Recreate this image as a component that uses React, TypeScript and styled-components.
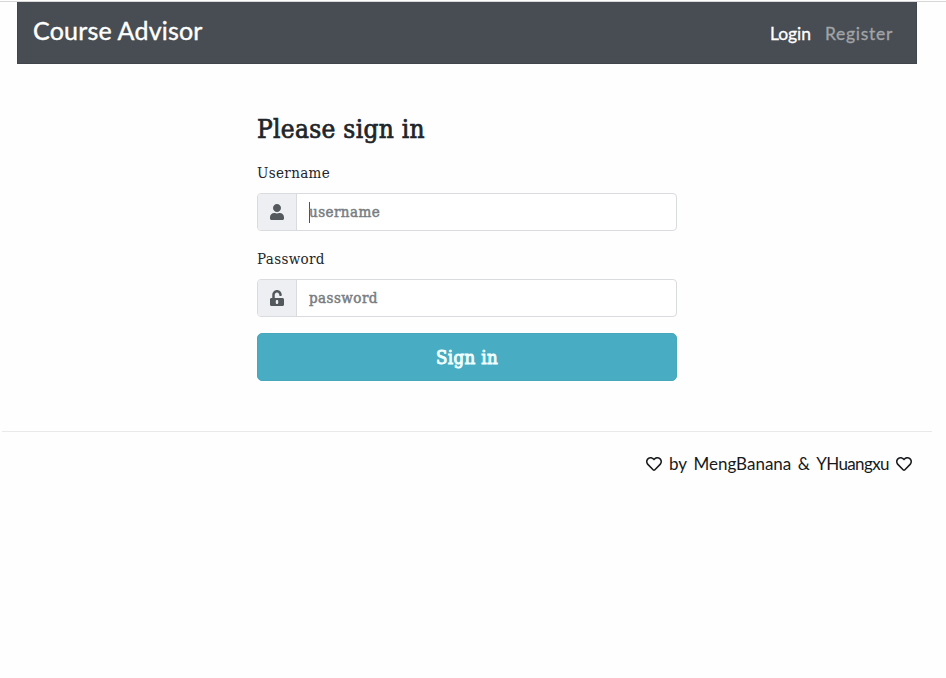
import React from "react";
import styled, { createGlobalStyle } from "styled-components";
import { FaRegHeart, FaUnlockAlt, FaUser } from "react-icons/fa";

const slab = `"DejaVu Serif Condensed", "DejaVu Serif", serif`;
const hand = `"Lato", sans-serif`;

const GlobalStyle = createGlobalStyle`
  * { box-sizing: border-box; }
  body { margin: 0; background: #fefefe; color: #212529; font-family: ${slab}; }
`;

const Page = styled.div`
  height: 678px;
  overflow: hidden;
  padding-top: 1px;
`;

const TopRule = styled.div`
  height: 1px;
  background: #d8d8d8;
`;

const Navbar = styled.header`
  display: flex;
  align-items: center;
  justify-content: space-between;
  width: 900px;
  height: 62px;
  margin-left: 17px;
  padding: 0 23px 0 15px;
  background: #484d53;
  border: 1px solid #41464c;
  border-top: 0;
  font-family: ${hand};
`;

const Brand = styled.a`
  color: #fff;
  font-size: 25px;
  line-height: 32px;
  letter-spacing: 0.2px;
  margin-bottom: 6px;
  -webkit-text-stroke: 0.4px #fff;
`;

const Nav = styled.nav`
  display: flex;
  gap: 15px;
  margin-top: 2px;
`;

const NavLink = styled.a<{ $active?: boolean; $width: number }>`
  width: ${(p) => p.$width}px;
  color: ${(p) => (p.$active ? "#fff" : "#a2a4a7")};
  font-size: 17.5px;
  line-height: 24px;
  letter-spacing: ${(p) => (p.$active ? "-0.1px" : "0.7px")};
  -webkit-text-stroke: 0.3px currentColor;
`;

const Form = styled.form`
  display: flex;
  flex-direction: column;
  width: 420px;
  margin: 48px 0 0 257px;
`;

const Title = styled.h1`
  margin: 0 0 16px;
  font-size: 26px;
  font-weight: 400;
  line-height: 34px;
  letter-spacing: 0.3px;
  -webkit-text-stroke: 0.7px #212529;
`;

const Label = styled.label`
  height: 24px;
  margin-bottom: 7px;
  font-size: 15px;
  line-height: 23px;
  letter-spacing: 0.35px;
`;

const InputGroup = styled.div`
  display: flex;
  height: 38px;
  margin-bottom: 17px;
  border: 1px solid #d9dbde;
  border-radius: 4px;
  background: #fff;
  overflow: hidden;
`;

const Addon = styled.span`
  display: flex;
  align-items: center;
  justify-content: center;
  width: 39px;
  background: #eeeff3;
  border-right: 1px solid #d9dbde;
  color: #54595e;
`;

const Field = styled.div`
  display: flex;
  align-items: center;
  flex: 1;
  padding-left: 12px;
  color: #797d81;
  font-size: 15px;
  letter-spacing: 0.45px;
  -webkit-text-stroke: 0.5px #797d81;
`;

const Caret = styled.span`
  width: 1px;
  height: 21px;
  margin-right: -1px;
  background: #4e5358;
`;

const Submit = styled.button`
  height: 48px;
  margin-top: -1px;
  padding: 0;
  border: 1px solid #47a7bd;
  border-radius: 5px;
  background: #48acc3;
  color: #f0ffff;
  font-family: ${slab};
  font-size: 18.5px;
  letter-spacing: 0.4px;
  -webkit-text-stroke: 0.9px #f0ffff;
`;

const Footer = styled.footer`
  display: flex;
  align-items: center;
  justify-content: flex-end;
  width: 930px;
  height: 64px;
  margin: 50px 0 0 2px;
  padding-right: 20px;
  border-top: 1px solid #e9e9e9;
  color: #17191b;
  font-family: ${hand};
  font-size: 17px;
  line-height: 24px;
`;

const Credit = styled.span`
  display: flex;
  justify-content: space-between;
  width: 220px;
  margin: 0 7px;
  white-space: nowrap;
`;

const Author = styled.span<{ $tracking?: number }>`
  letter-spacing: ${(p) => p.$tracking ?? 0}px;
`;

export default function App() {
  return (
    <>
      <GlobalStyle />
      <Page>
        <TopRule />
        <Navbar>
          <Brand>Course Advisor</Brand>
          <Nav>
            <NavLink $active $width={40}>Login</NavLink>
            <NavLink $width={68}>Register</NavLink>
          </Nav>
        </Navbar>
        <Form>
          <Title>Please sign in</Title>
          <Label>Username</Label>
          <InputGroup>
            <Addon><FaUser size={16} /></Addon>
            <Field><Caret />username</Field>
          </InputGroup>
          <Label>Password</Label>
          <InputGroup>
            <Addon><FaUnlockAlt size={16} /></Addon>
            <Field>password</Field>
          </InputGroup>
          <Submit type="button">Sign in</Submit>
        </Form>
        <Footer>
          <FaRegHeart size={16} />
          <Credit>
            <span>by</span>
            <Author>MengBanana</Author>
            <span>&amp;</span>
            <Author $tracking={-0.6}>YHuangxu</Author>
          </Credit>
          <FaRegHeart size={16} />
        </Footer>
      </Page>
    </>
  );
}
